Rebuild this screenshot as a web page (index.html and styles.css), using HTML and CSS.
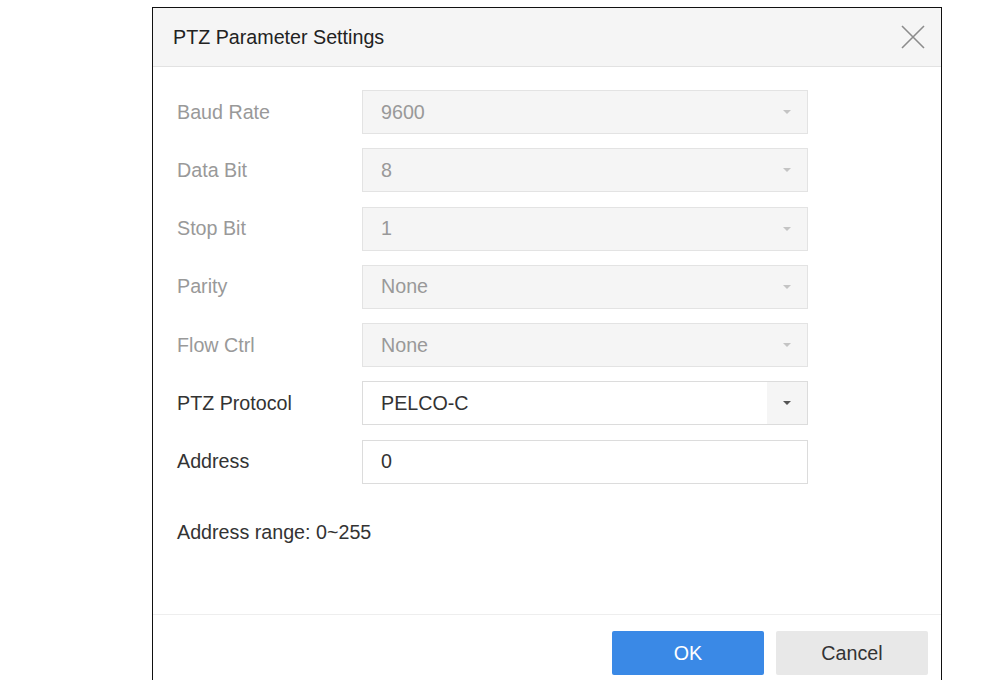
FILE: index.html
```html
<!DOCTYPE html>
<html lang="en">
<head>
  <meta charset="UTF-8">
  <title>PTZ Parameter Settings</title>
  <link rel="stylesheet" href="styles.css">
</head>
<body>

<div class="dialog">
  <div class="dialog-header">
    <div class="title">PTZ Parameter Settings</div>
    <div class="close">
      <svg width="24" height="24" viewBox="0 0 24 24">
        <path d="M1 1 L23 23 M23 1 L1 23" stroke="#8c8c8c" stroke-width="1.6" fill="none"/>
      </svg>
    </div>
  </div>

  <div class="dialog-body">
    <div class="row disabled">
      <div class="label">Baud Rate</div>
      <div class="select"><span class="value">9600</span><span class="caret"></span></div>
    </div>
    <div class="row disabled">
      <div class="label">Data Bit</div>
      <div class="select"><span class="value">8</span><span class="caret"></span></div>
    </div>
    <div class="row disabled">
      <div class="label">Stop Bit</div>
      <div class="select"><span class="value">1</span><span class="caret"></span></div>
    </div>
    <div class="row disabled">
      <div class="label">Parity</div>
      <div class="select"><span class="value">None</span><span class="caret"></span></div>
    </div>
    <div class="row disabled">
      <div class="label">Flow Ctrl</div>
      <div class="select"><span class="value">None</span><span class="caret"></span></div>
    </div>
    <div class="row">
      <div class="label">PTZ Protocol</div>
      <div class="select"><span class="value">PELCO-C</span><span class="caret"></span></div>
    </div>
    <div class="row">
      <div class="label">Address</div>
      <div class="text-input"><span class="value">0</span></div>
    </div>

    <div class="hint">Address range: 0~255</div>
  </div>

  <div class="dialog-footer">
    <div class="btn btn-primary">OK</div>
    <div class="btn">Cancel</div>
  </div>
</div>

</body>
</html>
```

FILE: styles.css
```css
html, body{
  margin: 0;
  padding: 0;
  background: #fff;
  overflow: hidden;
}
body{
  font-family: "Liberation Sans", Arial, sans-serif;
  font-size: 19.7px;
  color: #333;
  height: 680px;
}
.dialog{
  box-sizing: border-box;
  margin: 7px 0 0 152px;
  width: 790px;
  height: 680px;
  border: 1px solid #111;
  border-bottom: none;
  background: #fff;
  display: flex;
  flex-direction: column;
}
.dialog-header{
  height: 58px;
  flex-shrink: 0;
  background: #f5f5f5;
  border-bottom: 1px solid #e2e2e2;
  display: flex;
  align-items: center;
  justify-content: space-between;
  padding: 0 16px 0 20px;
}
.title{
  color: #222;
}
.close{
  width: 24px;
  height: 24px;
  display: flex;
}
.dialog-body{
  padding: 23px 0 0 24px;
  height: 548px;
  flex-shrink: 0;
  box-sizing: border-box;
  border-bottom: 1px solid #eeeeee;
}
.row{
  display: flex;
  align-items: center;
  height: 44px;
  margin-bottom: 14.3px;
}
.label{
  width: 185px;
  color: #333;
}
.row.disabled .label{
  color: #999;
}
.select, .text-input{
  box-sizing: border-box;
  width: 446px;
  height: 44px;
  border: 1px solid #dcdcdc;
  display: flex;
  align-items: center;
  background: #fff;
}
.row.disabled .select{
  background: #f5f5f5;
  border-color: #e3e3e3;
}
.value{
  flex: 1;
  padding-left: 18px;
  color: #333;
}
.row.disabled .value{
  color: #999;
}
.caret{
  width: 40px;
  height: 100%;
  background: #f5f5f5;
  display: flex;
  align-items: center;
  justify-content: center;
}
.caret::after{
  content: "";
  border-left: 4px solid transparent;
  border-right: 4px solid transparent;
  border-top: 4px solid #555;
}
.row.disabled .caret::after{
  border-top-color: #c4c4c4;
}
.hint{
  margin-top: 37px;
  color: #333;
}
.dialog-footer{
  display: flex;
  justify-content: flex-end;
  gap: 12px;
  padding: 16px 13px 0 0;
}
.btn{
  width: 152px;
  height: 44px;
  box-sizing: border-box;
  display: flex;
  align-items: center;
  justify-content: center;
  background: #e8e8e8;
  color: #333;
  border-radius: 2px;
}
.btn-primary{
  background: #3a89e6;
  color: #fff;
}
```
